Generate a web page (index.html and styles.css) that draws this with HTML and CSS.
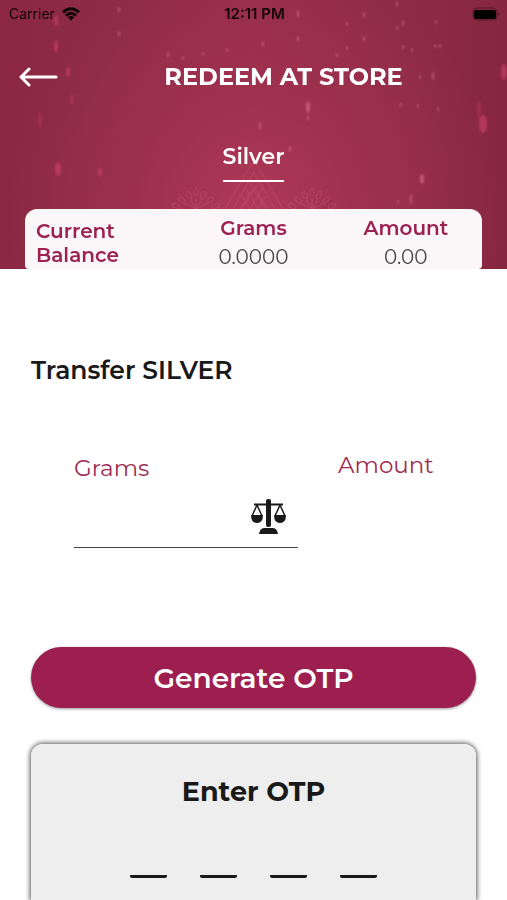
FILE: index.html
```html
<!DOCTYPE html>
<html lang="en">
<head>
<meta charset="utf-8">
<meta name="viewport" content="width=device-width, initial-scale=1">
<title>Redeem at store</title>
<link rel="stylesheet" href="styles.css">
</head>
<body>
<header class="hero">
  <svg class="hero-art" viewBox="0 0 507 269" preserveAspectRatio="none" aria-hidden="true">
    <defs>
      <filter id="soft" x="-5%" y="-5%" width="110%" height="110%"><feGaussianBlur stdDeviation="1"/></filter>
    </defs>
    <g fill="#e04a70" opacity=".5" filter="url(#soft)">
      <ellipse cx="56" cy="21" rx="2" ry="5"/><ellipse cx="56" cy="46" rx="2" ry="6"/>
      <ellipse cx="68" cy="72" rx="2" ry="5"/><ellipse cx="72" cy="99" rx="1" ry="5"/>
      <ellipse cx="40" cy="120" rx="2" ry="8" opacity=".4"/>
      <ellipse cx="58" cy="169" rx="3" ry="7"/><ellipse cx="100" cy="172" rx="2" ry="4"/>
      <ellipse cx="504" cy="72" rx="3" ry="8"/><ellipse cx="483" cy="124" rx="4" ry="9"/>
      <ellipse cx="479" cy="109" rx="2" ry="9" opacity=".5"/>
    </g>
    <g fill="#e37891" opacity=".6" filter="url(#soft)">
      <ellipse cx="308" cy="107" rx="2" ry="6"/><ellipse cx="308" cy="118" rx="1" ry="3"/>
      <ellipse cx="260" cy="126" rx="1" ry="4"/><ellipse cx="422" cy="179" rx="2" ry="5"/>
      <ellipse cx="411" cy="199" rx="1" ry="5"/><ellipse cx="398" cy="202" rx="1" ry="2"/>
      <ellipse cx="290" cy="149" rx="1" ry="3"/><ellipse cx="433" cy="76" rx="1" ry="4"/>
      <ellipse cx="119" cy="10" rx="1" ry="3"/><ellipse cx="119" cy="34" rx="1" ry="3"/>
      <ellipse cx="168" cy="55" rx="1" ry="3"/><ellipse cx="183" cy="58" rx="1" ry="2"/>
      <ellipse cx="203" cy="54" rx="1" ry="2"/><ellipse cx="227" cy="50" rx="1" ry="2"/>
      <ellipse cx="298" cy="14" rx="1" ry="4"/><ellipse cx="298" cy="39" rx="1" ry="3"/>
      <ellipse cx="263" cy="44" rx="1" ry="3"/><ellipse cx="347" cy="24" rx="1" ry="2"/>
      <ellipse cx="364" cy="15" rx="1" ry="3"/><ellipse cx="364" cy="39" rx="1" ry="3"/>
      <ellipse cx="347" cy="48" rx="1" ry="2"/><ellipse cx="337" cy="55" rx="1" ry="2"/>
      <ellipse cx="397" cy="4" rx="1" ry="3"/><ellipse cx="403" cy="23" rx="1" ry="3"/>
      <ellipse cx="397" cy="28" rx="1" ry="2"/><ellipse cx="403" cy="47" rx="1" ry="2"/>
      <ellipse cx="412" cy="50" rx="1" ry="2"/><ellipse cx="436" cy="22" rx="1" ry="2"/>
      <ellipse cx="440" cy="46" rx="1" ry="2"/><ellipse cx="435" cy="46" rx="1" ry="2"/>
      <ellipse cx="401" cy="105" rx="1" ry="2"/><ellipse cx="418" cy="106" rx="1" ry="2"/>
      <ellipse cx="438" cy="109" rx="1" ry="2"/><ellipse cx="420" cy="77" rx="1" ry="2"/>
    </g>
    <g fill="none" stroke="#d0647f" stroke-width="1" opacity=".35">
      <path d="M225 209 251 165q3-4 6 0l26 44M233 209 254 172 275 209M240 209 254 187 268 209M242 196l8 13m-4-20 12 20m-9-27 17 27m0-13-8 13m4-20-12 20m9-27-17 27"/>
      <g id="fan">
        <path d="M196 209v-11M196 209l-6-10M196 209l6-10M196 209l-12-6M196 209l12-6"/>
        <ellipse cx="196" cy="192" rx="2" ry="4"/><ellipse cx="189" cy="195" rx="2" ry="4" transform="rotate(-25 189 195)"/>
        <ellipse cx="203" cy="195" rx="2" ry="4" transform="rotate(25 203 195)"/>
        <ellipse cx="182" cy="200" rx="2" ry="4" transform="rotate(-50 182 200)"/>
        <ellipse cx="210" cy="200" rx="2" ry="4" transform="rotate(50 210 200)"/>
        <ellipse cx="176" cy="206" rx="2" ry="4" transform="rotate(-70 176 206)"/>
        <ellipse cx="216" cy="206" rx="2" ry="4" transform="rotate(70 216 206)"/>
      </g>
      <use href="#fan" x="116"/>
    </g>
  </svg>
  <div class="status">
    <div class="carrier"><span>Carrier</span>
      <svg class="wifi" width="18" height="14" viewBox="0 0 18 14" aria-hidden="true">
        <g fill="none" stroke="#120508" stroke-width="3"><path d="M1 5.400Q9-2 17 5.400"/><path d="M4 8.600Q9 4 14 8.600"/></g>
        <path d="M5.900 10.300Q9 7.900 12.100 10.300L9 13.700Z" fill="#120508"/>
      </svg>
    </div>
    <time class="clock">12:11 PM</time>
    <svg class="battery" width="28" height="14" viewBox="0 0 28 14" aria-hidden="true">
      <rect x="1" y="1" width="24" height="12" rx="4" fill="none" stroke="#57172b"/>
      <rect x="2" y="3" width="22" height="9" rx="2" fill="#000"/>
      <path d="M26 5q3 2 0 4z" fill="#57172b"/>
    </svg>
  </div>
  <div class="titlebar">
    <button class="back" type="button" aria-label="Back">
      <svg width="40" height="20" viewBox="0 0 40 20" fill="none" stroke="#fff" stroke-width="3" stroke-linecap="round" stroke-linejoin="round"><path d="M38 10H3M11 2 3 10l8 8"/></svg>
    </button>
    <h1>REDEEM AT STORE</h1>
  </div>
  <nav class="tabs"><a href="#silver" aria-current="page">Silver</a></nav>
  <table class="balance">
    <tr><th scope="row" rowspan="2">Current<br>Balance</th><th scope="col">Grams</th><th scope="col">Amount</th></tr>
    <tr><td>0.0000</td><td>0.00</td></tr>
  </table>
</header>
<main id="silver">
  <h2>Transfer SILVER</h2>
  <form>
    <div class="fields">
      <div class="field">
        <label for="grams">Grams</label>
        <div class="entry">
          <input id="grams" type="text" inputmode="decimal">
          <svg width="36" height="36" viewBox="0 0 36 36" aria-hidden="true">
            <g fill="#191919"><rect x="16" y="0" width="5" height="28" rx="2"/><path d="M4 4.500h29v2H4zM9 35q1-6 5-6h9q4 0 5 6zM1 16h12q0 8-6 8T1 16zM24 16h12q0 8-6 8T24 16z"/></g>
            <path d="M7 6 2 17M7 6l5 11M30 6l-5 11M30 6l5 11" fill="none" stroke="#191919" stroke-width="1.500"/>
          </svg>
        </div>
      </div>
      <div class="amount">Amount</div>
    </div>
    <button class="generate" type="button">Generate OTP</button>
    <fieldset class="otp">
      <legend>Enter OTP</legend>
      <div class="digits">
        <input type="text" inputmode="numeric" maxlength="1" aria-label="Digit 1">
        <input type="text" inputmode="numeric" maxlength="1" aria-label="Digit 2">
        <input type="text" inputmode="numeric" maxlength="1" aria-label="Digit 3">
        <input type="text" inputmode="numeric" maxlength="1" aria-label="Digit 4">
      </div>
    </fieldset>
  </form>
</main>
</body>
</html>
```
FILE: styles.css
```css
* { box-sizing: border-box; }
body {
  margin: 0;
  min-height: 100vh;
  display: flex;
  flex-direction: column;
  background: #fff;
  color: #191919;
  font-family: Montserrat, Inter, sans-serif;
}
button, input { font: inherit; }
h1, h2 { margin: 0; }

.hero {
  position: relative;
  isolation: isolate;
  background:
    radial-gradient(ellipse 50% 95% at 50% 80%, #b03858 0%, #a9365680 45%, transparent 100%),
    linear-gradient(90deg, #8b2742 0%, #8d2b45 18%, #962d49 50%, #8e2b45 80%, #87263f 100%);
}
.hero-art { position: absolute; inset: 0; width: 100%; height: 100%; z-index: -1; }

.status {
  display: grid;
  grid-template-columns: 1fr auto 1fr;
  align-items: center;
  height: 28px;
  padding: 0 7px 0 9px;
  color: #120508;
  font: 14px/18px Inter, sans-serif;
}
.carrier { display: flex; align-items: center; gap: 7px; }
.clock { font-size: 15px; font-weight: 600; }
.battery { justify-self: end; }

.titlebar {
  display: grid;
  grid-template-columns: 60px 1fr;
  align-items: center;
  height: 98px;
}
.back { display: flex; padding: 0; margin-left: 18px; border: 0; background: none; }
h1 { color: #fff; font-size: 24px; line-height: 32px; font-weight: 700; text-align: center; }

.tabs { display: flex; justify-content: center; height: 83px; padding-top: 16px; }
.tabs a {
  height: 40px;
  border-bottom: 2px solid #fff;
  color: #fff;
  font-size: 22px;
  line-height: 30px;
  font-weight: 600;
  text-decoration: none;
}

.balance {
  width: calc(100% - 50px);
  height: 60px;
  margin: 0 25px;
  table-layout: fixed;
  border-spacing: 0;
  border-radius: 12px 12px 4px 4px;
  background: #fbf7f8;
  font-size: 20px;
  line-height: 24px;
}
.balance th, .balance td { padding: 0; text-align: center; }
.balance th { padding-top: 7px; color: #9c2150; font-weight: 600; vertical-align: top; }
.balance th[scope="row"] { padding: 8px 0 0 11px; text-align: left; vertical-align: middle; }
.balance td { padding-top: 5px; color: #4a4648; font-weight: 400; vertical-align: middle; }

main { flex: 1; display: flex; flex-direction: column; padding: 86px 31px 0; }
h2 { font-size: 25px; line-height: 30px; font-weight: 600; }
form { flex: 1; display: flex; flex-direction: column; }
.fields {
  display: grid;
  grid-template-columns: 224px auto;
  gap: 40px;
  padding: 65px 0 0 43px;
  color: #a02b54;
  font-size: 23px;
  line-height: 30px;
  font-weight: 400;
}
.field label { display: block; padding-top: 3px; }
.entry {
  display: flex;
  align-items: center;
  height: 65px;
  padding: 4px 12px 0 0;
  border-bottom: 1px solid #444;
}
.entry input { flex: 1; min-width: 0; padding: 0; border: 0; outline: 0; background: none; }
.entry svg { flex: none; }

.generate {
  height: 61px;
  margin-top: 99px;
  border: 0;
  border-radius: 32px;
  background: #9d1f50;
  color: #fff;
  font-size: 28px;
  line-height: 36px;
  font-weight: 600;
  box-shadow: 0 1px 3px #0006;
}
.otp {
  flex: 1;
  min-width: 0;
  margin: 36px 0 0;
  padding: 31px 0 0;
  border: 0;
  border-radius: 12px 12px 0 0;
  background: #eee;
  box-shadow: 0 0 5px 1px #000a;
}
.otp legend { float: left; width: 100%; padding: 0; text-align: center; font-size: 27px; line-height: 34px; font-weight: 700; }
.digits { clear: both; display: flex; justify-content: center; gap: 33px; padding-top: 33px; }
.digits input {
  width: 37px;
  height: 36px;
  padding: 0;
  border: 0;
  border-bottom: 3px solid #191919;
  border-radius: 2px;
  outline: 0;
  background: none;
  text-align: center;
}
```
